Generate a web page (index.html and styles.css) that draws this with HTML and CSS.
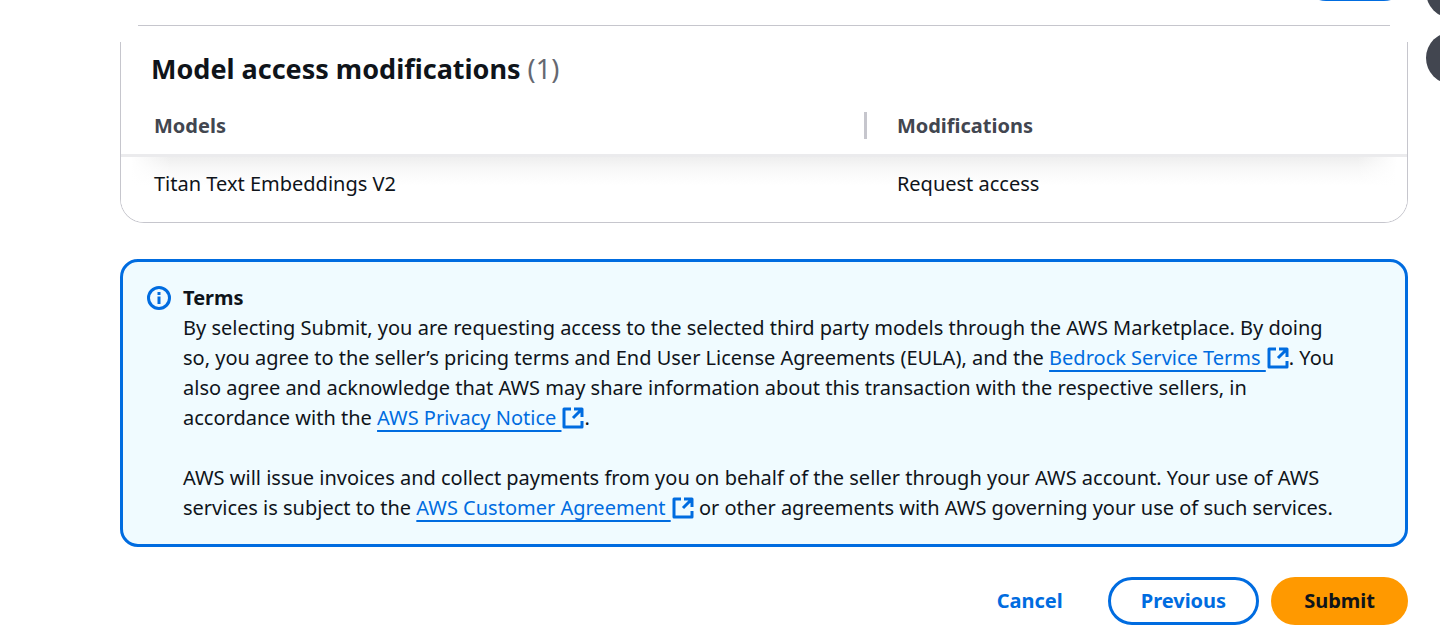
FILE: index.html
```html
<!DOCTYPE html>
<html lang="en">
<head>
<meta charset="utf-8">
<title>Model access</title>
<link rel="stylesheet" href="styles.css">
</head>
<body>
<svg class="sprite" aria-hidden="true">
  <symbol id="external" viewBox="0 0 22 22">
    <path d="M9 2H2v18h18v-6M12 2h8v8M20 2l-9 9" fill="none" stroke="currentColor" stroke-width="3" stroke-linejoin="round"/>
  </symbol>
</svg>
<div class="toolbar" aria-hidden="true"><div class="toolbar-pill"></div></div>
<aside class="side-tools" aria-hidden="true"><span class="side-tool"></span><span class="side-tool"></span></aside>
<main class="page">
  <div class="card-rule"></div>
  <section class="card">
    <h2 class="card-title">Model access modifications <span class="count">(1)</span></h2>
    <table class="models">
      <thead>
        <tr><th scope="col" class="col-model"><div class="head-cell">Models</div></th><th scope="col">Modifications</th></tr>
      </thead>
      <tbody>
        <tr><td>Titan Text Embeddings V2</td><td>Request access</td></tr>
      </tbody>
    </table>
  </section>
  <section class="terms">
    <svg class="info" viewBox="0 0 24 24" aria-hidden="true">
      <circle cx="12" cy="12" r="10.500" fill="none" stroke="currentColor" stroke-width="3"/>
      <path d="M10.500 6h3v3h-3zM10.500 10.500h3v7.500h-3z" fill="currentColor"/>
    </svg>
    <div class="terms-body">
      <h3 class="terms-title">Terms</h3>
      <p>By selecting Submit, you are requesting access to the selected third party models through the AWS Marketplace. By doing so, you agree to the seller’s pricing terms and End User License Agreements (EULA), and the <a class="link" href="#service-terms"><span class="link-text">Bedrock Service Terms </span><svg class="ext"><use href="#external"/></svg></a>. You also agree and acknowledge that AWS may share information about this transaction with the respective sellers, in accordance with the <a class="link" href="#privacy"><span class="link-text">AWS Privacy Notice </span><svg class="ext"><use href="#external"/></svg></a>.</p>
      <p>AWS will issue invoices and collect payments from you on behalf of the seller through your AWS account. Your use of AWS services is subject to the <a class="link" href="#agreement"><span class="link-text">AWS Customer Agreement </span><svg class="ext"><use href="#external"/></svg></a> or other agreements with AWS governing your use of such services.</p>
    </div>
  </section>
  <div class="actions">
    <button type="button" class="btn btn-link">Cancel</button>
    <button type="button" class="btn btn-outline">Previous</button>
    <button type="submit" class="btn btn-primary">Submit</button>
  </div>
</main>
</body>
</html>
```
FILE: styles.css
```css
* { box-sizing: border-box; }
body {
  margin: 0;
  background: #fff;
  color: #0f141a;
  font: 20px/30px "Noto Sans", "Open Sans", sans-serif;
}
.sprite { display: none; }
.toolbar {
  display: flex;
  justify-content: flex-end;
  align-items: flex-end;
  height: 1px;
  overflow: hidden;
  padding-right: 32px;
}
.toolbar-pill {
  flex: none;
  width: 106px;
  height: 48px;
  border-radius: 24px;
  background: #006ce0;
}
.side-tools {
  position: fixed;
  top: -34px;
  right: -38px;
  display: grid;
  gap: 14px;
}
.side-tool {
  width: 52px;
  height: 52px;
  border-radius: 50%;
  background: #424650;
}
.page { padding: 24px 32px 16px 120px; }
.card-rule { margin: 0 18px 16px; border-top: 1px solid #c6c6cd; }
.card {
  overflow: hidden;
  border: 1px solid #c6c6cd;
  border-top: 0;
  border-radius: 0 0 24px 24px;
}
.card-title {
  margin: 0;
  padding: 9px 30px 25px;
  font-size: 27px;
  line-height: 36px;
  font-weight: 700;
}
.count { color: #656871; font-weight: 400; }
.models {
  width: 100%;
  border-collapse: separate;
  border-spacing: 0;
  table-layout: fixed;
  text-align: left;
}
.models th {
  padding: 0 30px 15px;
  border-bottom: 3px solid #ebebed;
  color: #424650;
  font-weight: 700;
  line-height: 27px;
}
.models .col-model { width: 58%; padding: 0 0 15px 33px; }
.head-cell { border-right: 3px solid #c6c6cd; }
.models tbody tr {
  background:
    linear-gradient(to right, #fff 10px, transparent 50px, transparent calc(100% - 50px), #fff calc(100% - 10px)),
    linear-gradient(#eee, #f8f8f8 12px, #fff 28px);
}
.models td { padding: 12px 30px 23px; }
.models td:first-child { padding-left: 33px; }
.terms {
  display: flex;
  gap: 12px;
  margin-top: 36px;
  padding: 21px 54px 21px 24px;
  border: 3px solid #006ce0;
  border-radius: 18px;
  background: #f0fbff;
}
.info { flex: none; width: 24px; height: 24px; margin-top: 3px; color: #006ce0; }
.terms-title { margin: 0; font-size: 20px; line-height: 30px; }
.terms-body p { margin: 0; }
.terms-body p + p { margin-top: 30px; }
.link { color: #006ce0; text-decoration: none; }
.link-text {
  text-decoration: underline 2px;
  text-underline-offset: 5px;
  text-decoration-skip-ink: none;
}
.ext { width: 22px; height: 22px; margin-left: 1px; vertical-align: -4px; }
.actions { display: flex; justify-content: flex-end; gap: 12px; margin-top: 30px; }
.btn {
  height: 48px;
  padding: 0 30px;
  border: 3px solid transparent;
  border-radius: 24px;
  background: transparent;
  color: #006ce0;
  font: inherit;
  font-weight: 700;
}
.btn-outline { border-color: #006ce0; }
.btn-primary { background: #f90; color: #0f141a; }
```
